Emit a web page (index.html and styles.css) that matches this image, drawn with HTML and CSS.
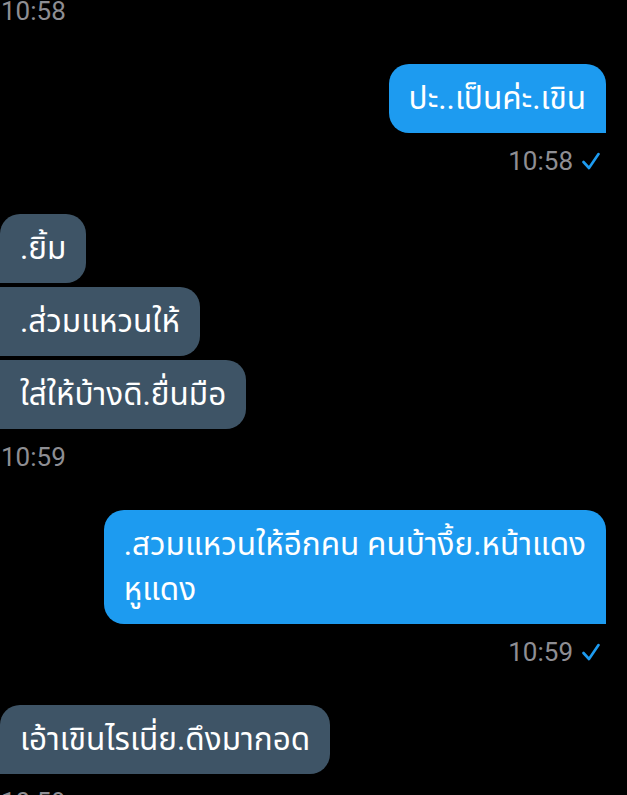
FILE: index.html
```html
<!DOCTYPE html>
<html lang="th">
<head>
  <meta charset="UTF-8" />
  <meta name="viewport" content="width=device-width, initial-scale=1.0"/>
  <title>Chat</title>
  <link rel="stylesheet" href="styles.css">
</head>
<body>

<div class="chat">

  <div class="group in">
    <div class="time">10:58</div>
  </div>

  <div class="group out">
    <div class="bubble">ปะ..เป็นค่ะ.เขิน</div>
    <div class="time">10:58
      <svg class="tick" viewBox="0 0 18 18"><polyline points="1.5,10 7,16 16.5,2"/></svg>
    </div>
  </div>

  <div class="group in">
    <div class="bubble">.ยิ้ม</div>
    <div class="bubble">.ส่วมแหวนให้</div>
    <div class="bubble">ใส่ให้บ้างดิ.ยื่นมือ</div>
    <div class="time">10:59</div>
  </div>

  <div class="group out">
    <div class="bubble">.สวมแหวนให้อีกคน คนบ้างึ้ย.หน้าแดง<br>หูแดง</div>
    <div class="time">10:59
      <svg class="tick" viewBox="0 0 18 18"><polyline points="1.5,10 7,16 16.5,2"/></svg>
    </div>
  </div>

  <div class="group in">
    <div class="bubble">เอ้าเขินไรเนี่ย.ดึงมากอด</div>
    <div class="time">10:59</div>
  </div>

</div>

</body>
</html>
```

FILE: styles.css
```css
* { box-sizing: border-box; }
html, body {
  background: #000;
  margin: 0;
  padding: 0;
  overflow: hidden;
}
body {
  font-family: Roboto, "Noto Sans Thai", "Noto Sans", sans-serif;
  color: #fff;
}
.chat {
  display: flex;
  flex-direction: column;
  gap: 38px;
  margin-top: -4px;
  padding: 0 21px 0 0;
}
.group {
  display: flex;
  flex-direction: column;
  gap: 4px;
}
.group.in { align-items: flex-start; }
.group.out { align-items: flex-end; }
.bubble {
  font-size: 31.5px;
  line-height: 45px;
  padding: 12px 20px;
  border-radius: 20px;
}
.in .bubble {
  background: #3e5466;
  border-radius: 0 20px 20px 0;
}
.in .bubble:first-child { border-top-left-radius: 20px; }
.out .bubble {
  background: #1d9bf0;
  border-radius: 20px 20px 0 20px;
}
.time {
  display: flex;
  align-items: center;
  margin-top: 9px;
  height: 30px;
  line-height: 30px;
  font-size: 26px;
  color: #8e8e93;
}
.group > .time:first-child { margin-top: 0; }
.in .time { padding-left: 1px; }
.out .time { padding-right: 6px; }
.tick {
  width: 18px;
  height: 18px;
  margin-left: 9px;
  fill: none;
  stroke: #1d9bf0;
  stroke-width: 2.6;
  stroke-linecap: round;
  stroke-linejoin: round;
}
```
